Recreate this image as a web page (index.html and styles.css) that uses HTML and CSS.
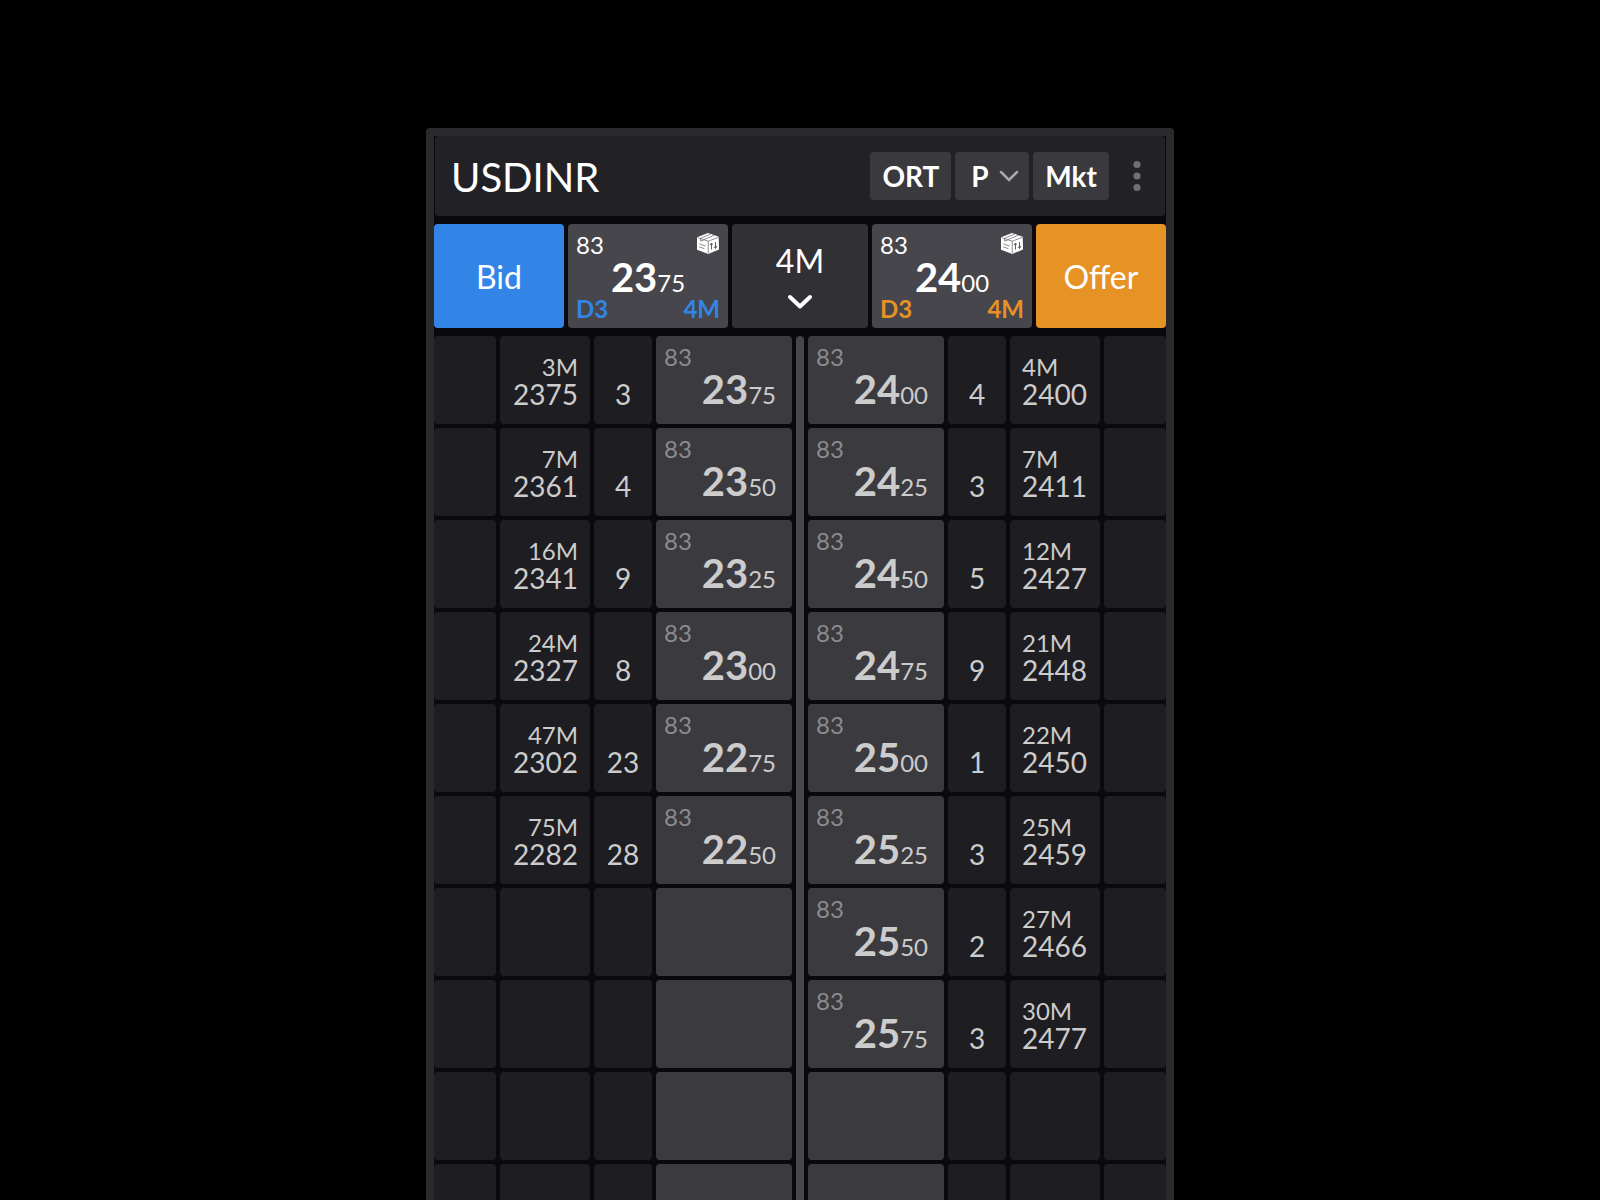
FILE: index.html
```html
<!DOCTYPE html>
<html lang="en">
<head>
<meta charset="utf-8">
<meta name="viewport" content="width=device-width, initial-scale=1">
<title>USDINR ladder</title>
<link rel="stylesheet" href="styles.css">
</head>
<body>
<svg class="defs" aria-hidden="true">
  <symbol id="box" viewBox="0 0 22 21">
    <path d="M11 0 21.700 3.700 22 16.500 11.200 21 0 16.700 0 4.200Z" fill="#fff"/>
    <path d="M.5 4.600 11.200 8.200 21.500 4.300M11.200 8.200V20.500M3.500 5.200 13.500 1.200M7 6.500 16.800 2.500M3.600 5.300V8L6.500 7.200M2.200 10.800 8.500 13M2.200 13.800 7.500 15.700" fill="none" stroke="#5c5b61" stroke-width=".7"/>
    <path d="M14.500 16.500V10.400M13 12 14.500 10.200 16 11.500M18.500 9.200V15.200M17 13.800 18.500 15.400 20 13" fill="none" stroke="#47464c" stroke-width=".9"/>
  </symbol>
</svg>
<main class="panel">
  <header class="head">
    <h1 class="pair">USDINR</h1>
    <div class="tools">
      <button class="tool" type="button">ORT</button>
      <label class="picker">
        <select class="tool tool-select" aria-label="Price type"><option>P</option></select>
        <svg class="picker-arrow" viewBox="0 0 20 12" aria-hidden="true"><path d="M2 2 10 10 18 2" fill="none" stroke="#a9a8ad" stroke-width="2.500" stroke-linecap="round"/></svg>
      </label>
      <button class="tool" type="button">Mkt</button>
      <button class="more" type="button" aria-label="More options">
        <svg viewBox="0 0 8 32" aria-hidden="true"><g fill="#706f74"><circle cx="4" cy="4.500" r="3.600"/><circle cx="4" cy="16" r="3.600"/><circle cx="4" cy="27.500" r="3.600"/></g></svg>
      </button>
    </div>
  </header>

  <section class="deal" aria-label="Top of book">
    <button class="side side-bid" type="button">Bid</button>
    <button class="quote quote-bid" type="button">
      <span class="quote-top"><span>83</span><svg class="box" aria-hidden="true"><use href="#box"/></svg></span>
      <span class="rate"><b>23</b><small>75</small></span>
      <span class="quote-foot"><span>D3</span><span>4M</span></span>
    </button>
    <label class="picker">
      <select class="size" aria-label="Order size"><option>4M</option></select>
      <svg class="size-arrow" viewBox="0 0 28 18" aria-hidden="true"><path d="M4 4 14 13.500 24 4" fill="none" stroke="#fff" stroke-width="4" stroke-linecap="round" stroke-linejoin="round"/></svg>
    </label>
    <button class="quote quote-offer" type="button">
      <span class="quote-top"><span>83</span><svg class="box" aria-hidden="true"><use href="#box"/></svg></span>
      <span class="rate"><b>24</b><small>00</small></span>
      <span class="quote-foot"><span>D3</span><span>4M</span></span>
    </button>
    <button class="side side-offer" type="button">Offer</button>
  </section>

  <table class="ladder" aria-label="Market depth">
    <tbody>
      <tr><td></td><td class="depth bid"><small>3M</small>2375</td><td class="count">3</td><td class="price"><small class="big">83</small><span class="rate"><b>23</b><small>75</small></span></td><td class="spine" rowspan="10"></td><td class="price"><small class="big">83</small><span class="rate"><b>24</b><small>00</small></span></td><td class="count">4</td><td class="depth"><small>4M</small>2400</td><td></td></tr>
      <tr><td></td><td class="depth bid"><small>7M</small>2361</td><td class="count">4</td><td class="price"><small class="big">83</small><span class="rate"><b>23</b><small>50</small></span></td><td class="price"><small class="big">83</small><span class="rate"><b>24</b><small>25</small></span></td><td class="count">3</td><td class="depth"><small>7M</small>2411</td><td></td></tr>
      <tr><td></td><td class="depth bid"><small>16M</small>2341</td><td class="count">9</td><td class="price"><small class="big">83</small><span class="rate"><b>23</b><small>25</small></span></td><td class="price"><small class="big">83</small><span class="rate"><b>24</b><small>50</small></span></td><td class="count">5</td><td class="depth"><small>12M</small>2427</td><td></td></tr>
      <tr><td></td><td class="depth bid"><small>24M</small>2327</td><td class="count">8</td><td class="price"><small class="big">83</small><span class="rate"><b>23</b><small>00</small></span></td><td class="price"><small class="big">83</small><span class="rate"><b>24</b><small>75</small></span></td><td class="count">9</td><td class="depth"><small>21M</small>2448</td><td></td></tr>
      <tr><td></td><td class="depth bid"><small>47M</small>2302</td><td class="count">23</td><td class="price"><small class="big">83</small><span class="rate"><b>22</b><small>75</small></span></td><td class="price"><small class="big">83</small><span class="rate"><b>25</b><small>00</small></span></td><td class="count">1</td><td class="depth"><small>22M</small>2450</td><td></td></tr>
      <tr><td></td><td class="depth bid"><small>75M</small>2282</td><td class="count">28</td><td class="price"><small class="big">83</small><span class="rate"><b>22</b><small>50</small></span></td><td class="price"><small class="big">83</small><span class="rate"><b>25</b><small>25</small></span></td><td class="count">3</td><td class="depth"><small>25M</small>2459</td><td></td></tr>
      <tr><td></td><td></td><td></td><td class="price"></td><td class="price"><small class="big">83</small><span class="rate"><b>25</b><small>50</small></span></td><td class="count">2</td><td class="depth"><small>27M</small>2466</td><td></td></tr>
      <tr><td></td><td></td><td></td><td class="price"></td><td class="price"><small class="big">83</small><span class="rate"><b>25</b><small>75</small></span></td><td class="count">3</td><td class="depth"><small>30M</small>2477</td><td></td></tr>
      <tr><td></td><td></td><td></td><td class="price"></td><td class="price"></td><td></td><td></td><td></td></tr>
      <tr><td></td><td></td><td></td><td class="price"></td><td class="price"></td><td></td><td></td><td></td></tr>
    </tbody>
  </table>
</main>
</body>
</html>
```
FILE: styles.css
```css
* { box-sizing: border-box; }

body {
  margin: 0;
  height: 100vh;
  overflow: hidden;
  padding: 128px 16px 0;
  background: #000;
  color: #fff;
  font-family: Lato, sans-serif;
}

button, select {
  margin: 0;
  padding: 0;
  border: 0;
  border-radius: 4px;
  font: inherit;
  color: inherit;
  appearance: none;
  cursor: pointer;
}

small { font-size: 24px; line-height: 24px; font-weight: 400; }

.defs { display: none; }

.panel {
  display: flex;
  flex-direction: column;
  gap: 8px;
  max-width: 748px;
  margin: 0 auto;
  border: 8px solid #2a292e;
  border-radius: 4px;
  background: #0a0a0c;
}

.head {
  display: flex;
  align-items: center;
  justify-content: space-between;
  margin: 0 1px;
  padding: 16px 8px 16px 16px;
  border-radius: 4px;
  background: #222126;
}
.pair { margin: 0; padding-top: 2px; font-size: 40px; line-height: 40px; font-weight: 400; }

.tools { display: flex; align-items: center; gap: 4px; }
.tool {
  height: 48px;
  padding: 0 12px;
  background: #3a393e;
  font-size: 28px;
  line-height: 28px;
  font-weight: 700;
}
.tool-select { width: 74px; padding: 0 16px; }

.picker { display: grid; }
.picker > * { grid-area: 1 / 1; }
.picker-arrow {
  align-self: center;
  justify-self: end;
  width: 20px;
  height: 12px;
  margin-right: 10px;
  pointer-events: none;
}
.more {
  display: flex;
  justify-content: center;
  width: 40px;
  margin-left: 4px;
  background: none;
}
.more svg { width: 8px; height: 32px; }

.deal {
  display: grid;
  grid-template-columns: 130fr 160fr 136fr 160fr 130fr;
  gap: 4px;
}
.side { padding-top: 2px; font-size: 32px; line-height: 32px; }
.side-bid { background: #3285e6; }
.side-offer { background: #e69224; }

.quote {
  display: flex;
  flex-direction: column;
  height: 104px;
  padding: 9px 8px 0;
  background: #47464c;
  font-size: 24px;
  line-height: 24px;
}
.quote-top, .quote-foot { display: flex; justify-content: space-between; width: 100%; }
.quote-foot { font-weight: 700; }
.quote-bid .quote-foot { color: #3285e6; }
.quote-offer .quote-foot { color: #e69224; }
.quote .rate { align-self: center; }
.box { width: 22px; height: 21px; margin-right: 1px; }

.rate { display: block; font-size: 40px; line-height: 40px; }
.rate b { font-weight: 700; }

.size {
  padding: 21px 0 51px;
  background: #313035;
  font-size: 32px;
  line-height: 32px;
  text-align: center;
  text-align-last: center;
}
.size-arrow {
  align-self: end;
  justify-self: center;
  width: 28px;
  height: 18px;
  margin-bottom: 17px;
  pointer-events: none;
}

.ladder {
  display: grid;
  grid-template-columns: 62fr 90fr 58fr 136fr 8fr 136fr 58fr 90fr 62fr;
  grid-auto-rows: 88px;
  gap: 4px;
  color: #ccc;
  font-size: 28px;
  line-height: 30px;
}
.ladder tbody, .ladder tr { display: contents; }
.ladder td {
  display: block;
  padding: 0;
  border-radius: 4px;
  background: #1e1d21;
}
.ladder .spine {
  grid-column: 5;
  grid-row: 1 / span 10;
  background: #47464c;
}
.ladder .depth { padding: 19px 12px 0; }
.depth small { display: block; }
.depth.bid { text-align: right; }
.ladder .count { padding-top: 43px; text-align: center; }
.ladder .price { padding: 9px 16px 0 8px; background: #3b3a3e; }
.price .big { display: block; color: #8b8a8f; }
.price .rate { text-align: right; }
```
